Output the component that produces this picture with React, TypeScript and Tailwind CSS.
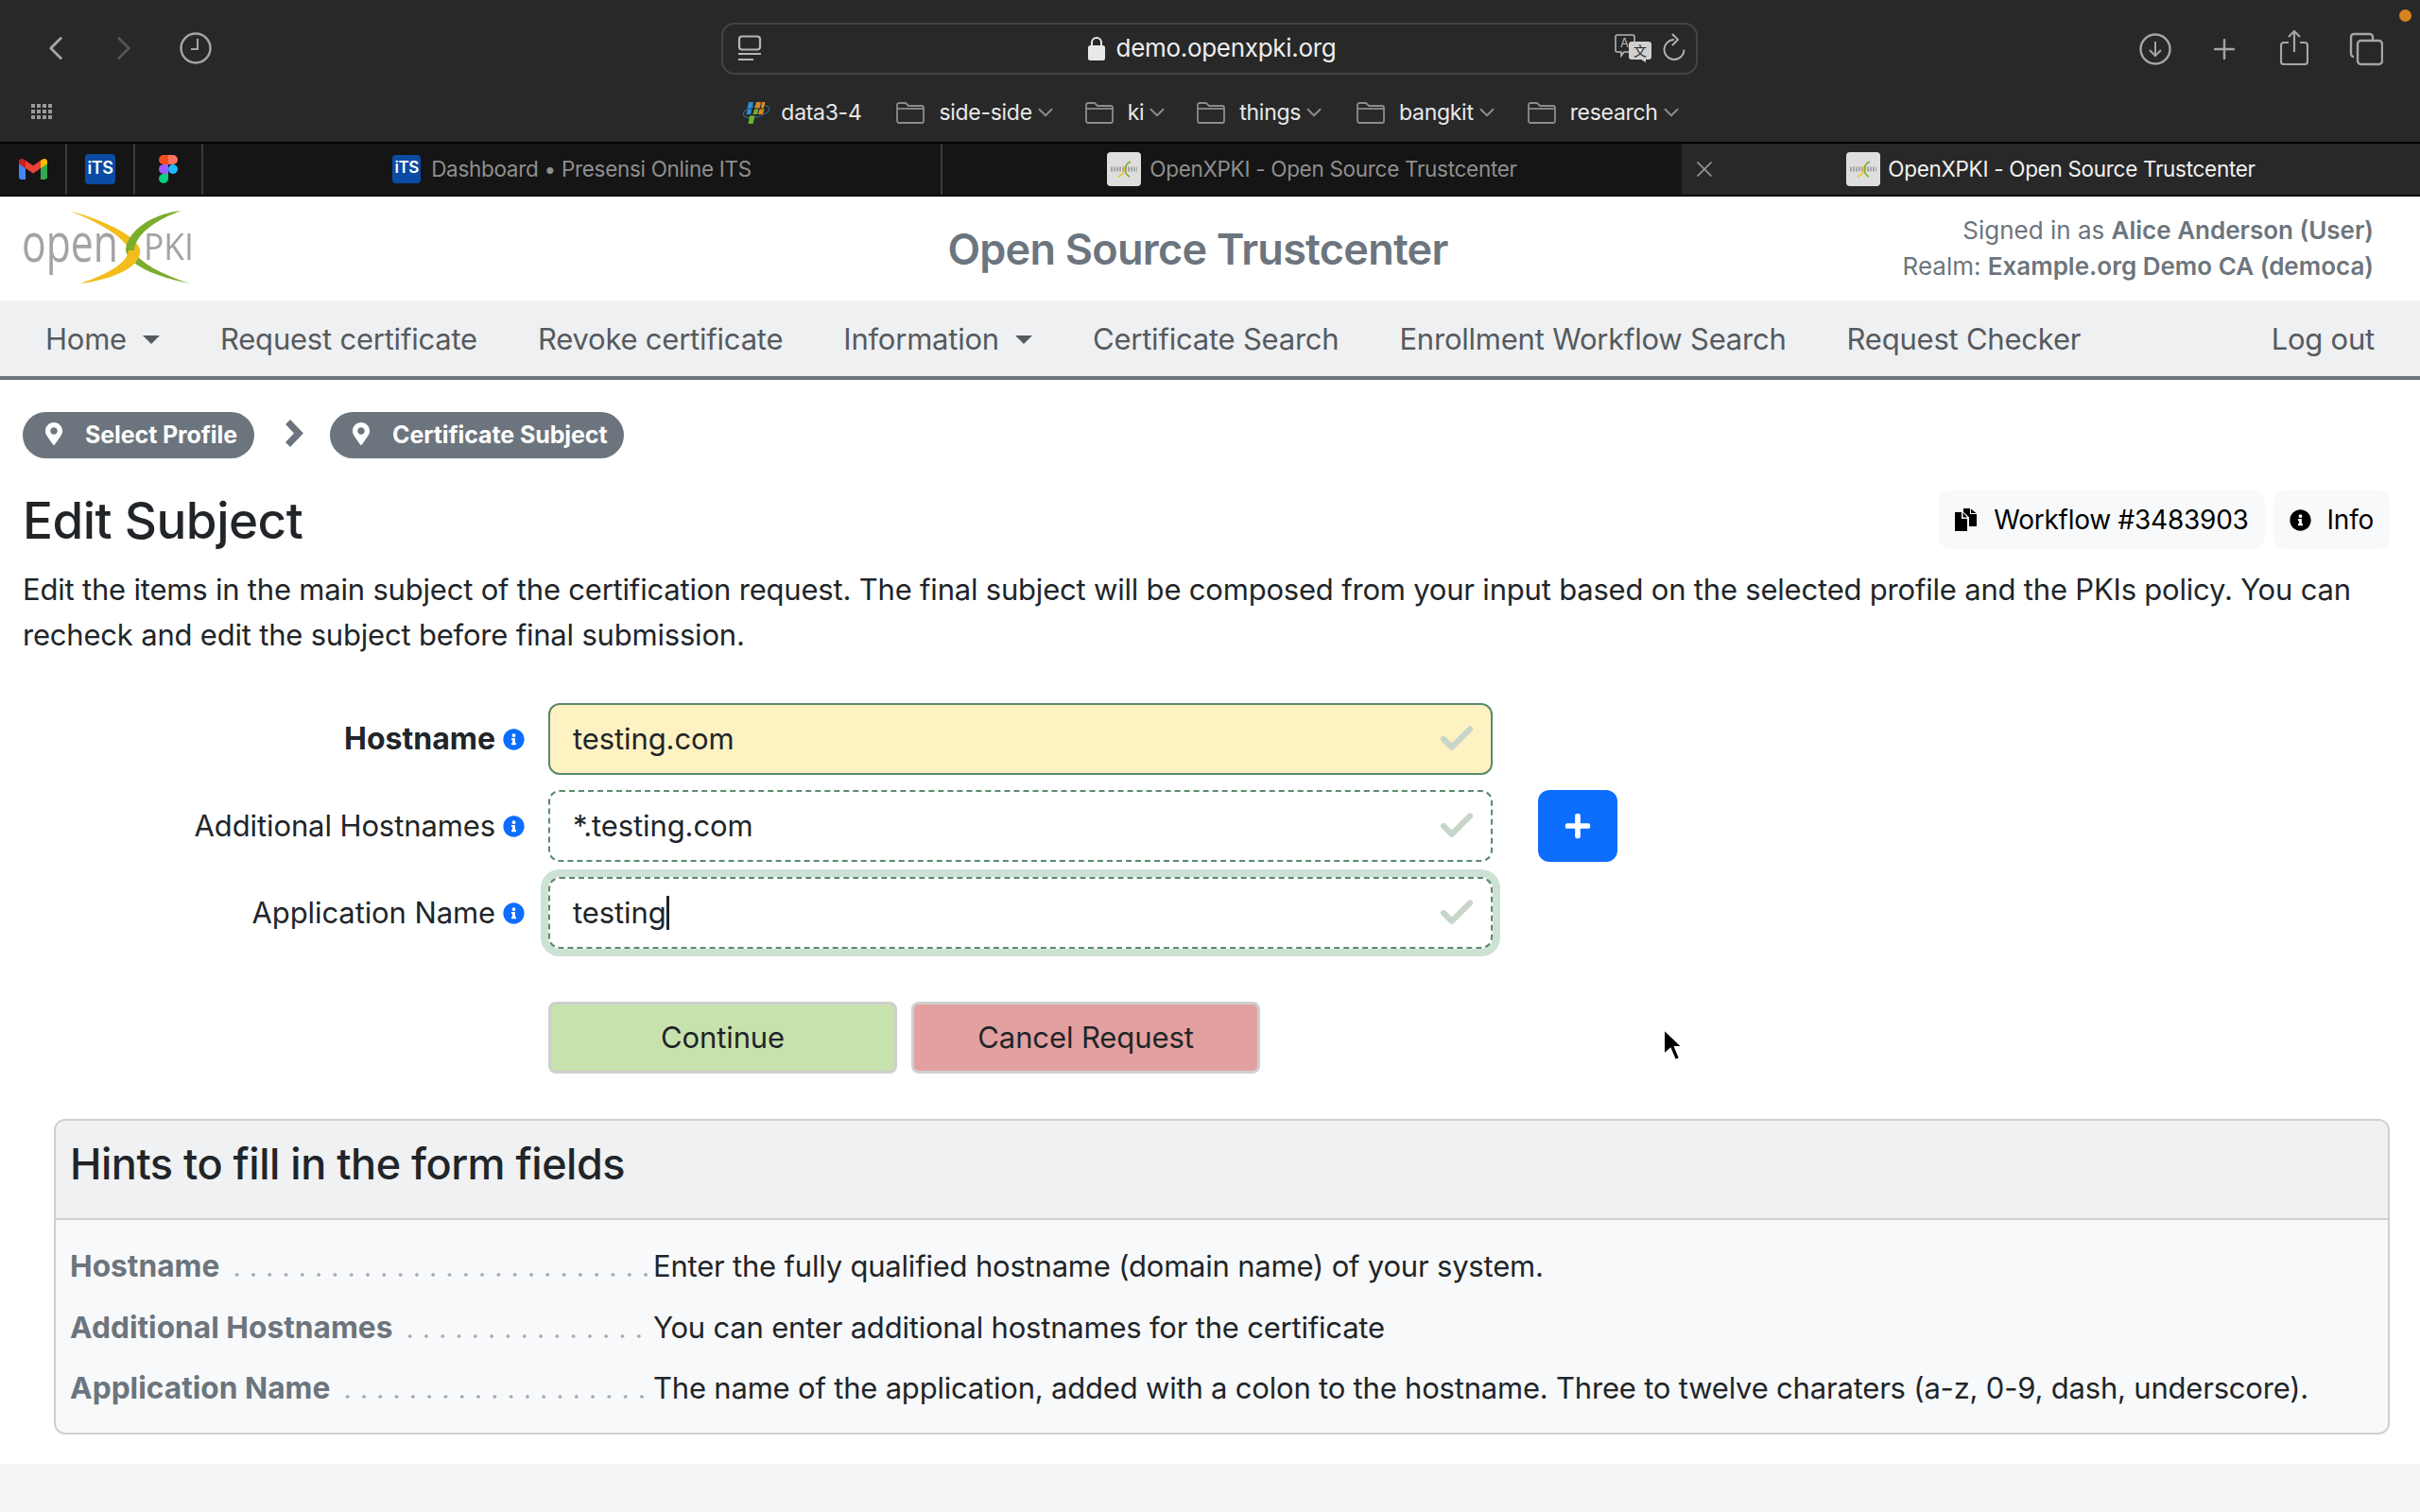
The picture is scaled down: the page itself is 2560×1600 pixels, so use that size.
import React from 'react';
import { ChevronLeft, ChevronRight, ChevronDown, Plus, Check, X } from 'lucide-react';
import { FaMapMarkerAlt, FaInfoCircle, FaPlus } from 'react-icons/fa';

const SANS = 'font-["Inter","Liberation_Sans",sans-serif]';

const FolderIcon = () => (
  <svg width="30" height="23" viewBox="0 0 30 23" fill="none" stroke="#8c8c8c" strokeWidth="1.8" className="shrink-0">
    <path d="M1 20V3a2 2 0 0 1 2-2h7l3 3h14a2 2 0 0 1 2 2v14a2 2 0 0 1-2 2H3a2 2 0 0 1-2-2z" />
    <path d="M1 7h28" />
  </svg>
);

const GmailIcon = () => (
  <svg width="30" height="22" viewBox="0 0 30 24" preserveAspectRatio="none" className="shrink-0">
    <path d="M0 4v17a3 3 0 0 0 3 3h4V10z" fill="#4285f4" />
    <path d="M23 10v14h4a3 3 0 0 0 3-3V4z" fill="#34a853" />
    <path d="M7 2v9l8 6 8-6V2l-8 6z" fill="#ea4335" />
    <path d="M0 3v3l7 5V2L5 .7A3 3 0 0 0 0 3z" fill="#c5221f" />
    <path d="M23 2v9l7-5V3a3 3 0 0 0-5-2.3z" fill="#fbbc04" />
  </svg>
);

const ItsIcon = ({ w, h }: { w: number; h: number }) => (
  <div
    className="flex items-center justify-center rounded-[4px] bg-[#0b4ba3] pb-[3px] leading-none text-[#ffffff] font-semibold tracking-[-0.5px] shrink-0"
    style={{ width: w, height: h, fontSize: Math.round(w * 0.56) }}
  >
    iTS
  </div>
);

const FigmaIcon = () => (
  <svg width="20" height="30" viewBox="0 0 20 30" className="shrink-0">
    <path d="M0 5a5 5 0 0 1 5-5h5v10H5a5 5 0 0 1-5-5z" fill="#f24e1e" />
    <path d="M10 0h5a5 5 0 0 1 0 10h-5z" fill="#ff7262" />
    <path d="M0 15a5 5 0 0 1 5-5h5v10H5a5 5 0 0 1-5-5z" fill="#a259ff" />
    <circle cx="15" cy="15" r="5" fill="#1abcfe" />
    <path d="M0 25a5 5 0 0 1 5-5h5v5a5 5 0 0 1-10 0z" fill="#0acf83" />
  </svg>
);

const DataIcon = () => (
  <svg width="30" height="24" viewBox="0 0 30 24" className="shrink-0">
    <ellipse cx="15" cy="11" rx="14" ry="6" transform="rotate(-14 15 11)" fill="none" stroke="#2a6f9e" strokeWidth="1" />
    <path d="M7 1h5l-1.5 6.5H5.500z" fill="#2a8fd8" />
    <path d="M15 1h5l-1.5 6.500h-5z" fill="#d98826" />
    <path d="M21 1h3.500l-1.500 6.500h-3z" fill="#d98826" />
    <path d="M6 8.500h4.500L9 14H4.500z" fill="#2a8fd8" />
    <path d="M13 8.500h4.500L16 14h-4.500z" fill="#6eb32a" />
    <path d="M18.500 8.500h5L22 14h-5z" fill="#d98826" />
    <path d="M8 15.500h5.500L11.500 24H6.500z" fill="#6eb32a" />
  </svg>
);

const OpenxpkiFavicon = () => (
  <div className="flex h-[36px] w-[36px] shrink-0 items-center justify-center rounded-[4px] bg-[#dedede]">
    <svg width="30" height="18" viewBox="0 0 30 18" fill="none">
      <path d="M1 9h28" stroke="#a5a5a5" strokeWidth="5" strokeDasharray="2 1" />
      <path d="M22 1C15 4 14 13 21 17" stroke="#77ab2c" strokeWidth="1.5" />
      <path d="M9 17c7-3 8-8 5-11" stroke="#eec21f" strokeWidth="1.5" />
    </svg>
  </div>
);

const BrowserChrome = () => (
  <div className={`relative ${SANS}`}>
    <div className="h-[150px] bg-[#282828] flex flex-col">
      <div className="flex h-[102px] items-center">
        <div className="flex w-[763px] items-center">
          <ChevronLeft size={42} strokeWidth={1.7} className="ml-[38px] text-[#a5a5a5]" />
          <ChevronRight size={42} strokeWidth={1.7} className="ml-[30px] text-[#555555]" />
          <svg width="36" height="36" viewBox="0 0 36 36" fill="none" stroke="#a5a5a5" strokeWidth="2.4" className="ml-[37px]">
            <circle cx="18" cy="18" r="15.5" />
            <path d="M20 8v11h-7" strokeWidth="2" />
          </svg>
        </div>
        <div className="flex h-[55px] w-[1033px] items-center rounded-[14px] border-2 border-[#444444]">
          <svg width="26" height="28" viewBox="0 0 26 28" fill="none" stroke="#b5b5b5" strokeWidth="2.2" className="ml-[15px]">
            <rect x="2" y="1.5" width="22" height="14" rx="3" />
            <path d="M1 20h24M1 26h16" />
          </svg>
          <div className="flex flex-1 items-center justify-center pl-[50px]">
            <svg width="18" height="26" viewBox="0 0 18 26" className="shrink-0">
              <path d="M4 11V7a5 5 0 0 1 10 0v4" fill="none" stroke="#e8e8e8" strokeWidth="2" />
              <rect x="0" y="10" width="18" height="16" rx="2.5" fill="#e8e8e8" />
            </svg>
            <span className="ml-[12px] text-[26px] leading-none tracking-[-0.3px] text-[#eeeeee]">demo.openxpki.org</span>
          </div>
          <svg width="40" height="30" viewBox="0 0 40 30" className="shrink-0">
            <path d="M3 1h16a2 2 0 0 1 2 2v14a2 2 0 0 1-2 2H10l-3 4v-4H3a2 2 0 0 1-2-2V3a2 2 0 0 1 2-2z" fill="none" stroke="#b5b5b5" strokeWidth="1.6" />
            <text x="6" y="14" fontSize="13" fill="#b5b5b5">A</text>
            <path d="M18 8h18a3 3 0 0 1 3 3v13a3 3 0 0 1-3 3h-3v3l-5-3h-10a3 3 0 0 1-3-3V11a3 3 0 0 1 3-3z" fill="#d0d0d0" />
            <text x="20" y="23" fontSize="14" fill="#282828" fontFamily="Noto Sans CJK SC, sans-serif">文</text>
          </svg>
          <svg width="26" height="32" viewBox="0 0 26 32" fill="none" stroke="#b5b5b5" strokeWidth="1.8" className="ml-[11px] mr-[9px] shrink-0">
            <path d="M12 7a10.500 10.500 0 1 0 10.500 10.500" />
            <path d="M10 1l6 6-6 6" />
          </svg>
        </div>
        <div className="relative flex-1 h-full">
          <div className="absolute left-[467px] top-[34px] flex items-center">
            <svg width="34" height="34" viewBox="0 0 34 34" fill="none" stroke="#a5a5a5" strokeWidth="2.4">
              <circle cx="17" cy="17" r="15.5" />
              <path d="M17 9v15M11 18l6 6 6-6" strokeWidth="2" />
            </svg>
            <Plus size={34} strokeWidth={1.7} className="ml-[39px] text-[#a5a5a5]" />
            <svg width="30" height="38" viewBox="0 0 30 38" fill="none" stroke="#a5a5a5" strokeWidth="2.2" className="ml-[42px] -mt-[4px]">
              <path d="M9 14H4a3 3 0 0 0-3 3v17a3 3 0 0 0 3 3h22a3 3 0 0 0 3-3V17a3 3 0 0 0-3-3h-5" />
              <path d="M15 24V2M9 8l6-6 6 6" />
            </svg>
            <svg width="36" height="36" viewBox="0 0 36 36" fill="none" stroke="#a5a5a5" strokeWidth="2.4" className="ml-[43px]">
              <path d="M5 26a3 3 0 0 1-3-3V5a3 3 0 0 1 3-3h17a3 3 0 0 1 3 3v3" />
              <rect x="9" y="9" width="26" height="25" rx="3.5" />
            </svg>
          </div>
        </div>
      </div>
      <div className="relative flex h-[34px] items-center justify-center tracking-[-0.3px]">
        <div className="absolute left-[33px] top-[8px] grid grid-cols-4 gap-[2px]">
          {Array.from({ length: 12 }).map((_, i) => (
            <div key={i} className="h-[4px] w-[4px] bg-[#9a9a9a]" />
          ))}
        </div>
        <DataIcon />
        <span className="ml-[11px] text-[23px] text-[#e8e8e8]">data3-4</span>
        {[
          { name: 'side-side', ml: 'ml-[37px]' },
          { name: 'ki', ml: 'ml-[35px]' },
          { name: 'things', ml: 'ml-[35px]' },
          { name: 'bangkit', ml: 'ml-[38px]' },
          { name: 'research', ml: 'ml-[36px]' },
        ].map(b => (
          <div key={b.name} className={`flex items-center ${b.ml}`}>
            <FolderIcon />
            <span className="ml-[15px] text-[23px] text-[#e8e8e8]">{b.name}</span>
            <ChevronDown size={26} strokeWidth={1.8} className="ml-[1px] -mr-[6px] text-[#8c8c8c]" />
          </div>
        ))}
      </div>
    </div>
    <div className="flex h-[58px] border-y-2 border-[#000000] bg-[#151515] text-[22.5px] tracking-[-0.3px]">
      <div className="flex w-[71px] items-center justify-center border-r-2 border-[#3a3a3a]"><GmailIcon /></div>
      <div className="flex w-[72px] items-center justify-center border-r-2 border-[#3a3a3a]"><ItsIcon w={32} h={32} /></div>
      <div className="flex w-[72px] items-center justify-center border-r-2 border-[#3a3a3a]"><FigmaIcon /></div>
      <div className="flex w-[782px] items-center justify-center border-r-2 border-[#3a3a3a]">
        <ItsIcon w={30} h={30} />
        <span className="ml-[11px] text-[#8f8f8f]">Dashboard • Presensi Online ITS</span>
      </div>
      <div className="flex w-[782px] items-center justify-center">
        <OpenxpkiFavicon />
        <span className="ml-[9px] text-[#8f8f8f]">OpenXPKI - Open Source Trustcenter</span>
      </div>
      <div className="relative flex flex-1 items-center justify-center bg-[#282828]">
        <X size={28} strokeWidth={1.5} className="absolute left-[10px] text-[#9a9a9a]" />
        <OpenxpkiFavicon />
        <span className="ml-[8px] text-[#f2f2f2]">OpenXPKI - Open Source Trustcenter</span>
      </div>
    </div>
    <div className="absolute left-[2538px] top-[10px] h-[13px] w-[13px] rounded-full bg-[#d9831f]" />
  </div>
);

const Logo = () => (
  <svg width="186" height="80" viewBox="0 0 186 80" className="shrink-0">
    <g className="blur-[0.6px]">
      <text x="0" y="54" fontSize="56" fontFamily="Open Sans, sans-serif" fill="#a3a3a3" textLength="102" lengthAdjust="spacingAndGlyphs">open</text>
      <text x="129" y="52" fontSize="39" fontFamily="Open Sans, sans-serif" fill="#a3a3a3" textLength="53" lengthAdjust="spacingAndGlyphs">PKI</text>
      <path d="M110 42C112 56 140 70 178 77 150 68 122 54 119 42z" fill="#7cae2e" />
      <path d="M51 0C85 10 118 24 125 40 128 58 100 72 62 77 88 68 112 56 113 42 110 28 80 12 51 0z" fill="#f3bd1c" />
      <path d="M169 0C140 2 110 22 110 42L119 42C120 24 145 8 169 0z" fill="#7cae2e" />
    </g>
  </svg>
);

const Header = () => (
  <div className="flex h-[110px] items-center bg-[#ffffff] pl-[23px] pr-[49px]">
    <div className="flex flex-1 basis-0"><Logo /></div>
    <div className="text-center text-[45px] font-semibold leading-none tracking-[-0.75px] text-[#6c757d]">
      Open Source Trustcenter
    </div>
    <div className="flex-1 basis-0 text-right text-[26px] leading-[38px] text-[#6c757d]">
      <div>Signed in as <b className="font-semibold">Alice Anderson (User)</b></div>
      <div>Realm: <b className="font-semibold">Example.org Demo CA (democa)</b></div>
    </div>
  </div>
);

const navLinks = [
  { label: 'Home', caret: true },
  { label: 'Request certificate' },
  { label: 'Revoke certificate' },
  { label: 'Information', caret: true },
  { label: 'Certificate Search' },
  { label: 'Enrollment Workflow Search' },
  { label: 'Request Checker' },
];

const Nav = () => (
  <div className="flex h-[84px] items-center border-b-4 border-[#6c757d] bg-[#eff0f2] px-4 pt-[2px] text-[31px] tracking-[-0.22px] text-[#555a5f]">
    {navLinks.map(l => (
      <div key={l.label} className="flex items-center px-8">
        {l.label}
        {l.caret && <span className="ml-[17px] h-0 w-0 border-x-[9px] border-t-[9px] border-x-transparent border-t-[#555a5f]" />}
      </div>
    ))}
    <div className="ml-auto px-8">Log out</div>
  </div>
);

const Crumb = ({ label }: { label: string }) => (
  <div className="flex h-[49px] items-center rounded-full bg-[#6c757d] pl-[21px] pr-[18px] text-[25px] font-bold tracking-[-0.1px] text-[#ffffff]">
    <FaMapMarkerAlt size={24} className="-mt-[4px]" />
    <span className="ml-[21px]">{label}</span>
  </div>
);

const FileIcon = () => (
  <svg width="24" height="24" viewBox="0 0 24 24" className="shrink-0">
    <path d="M0 4h7v7h6v13H0z" fill="#000000" />
    <path d="M8.5 4l4.5 5.5H8.5z" fill="#000000" />
    <path d="M9 0h7v6h7v13h-8V9.5L9 3.5z" fill="#000000" />
    <path d="M17 .5L22.5 5H17z" fill="#000000" />
  </svg>
);

const ToolButton = ({ icon, label }: { icon: React.ReactNode; label: string }) => (
  <div className="flex h-[62px] items-center rounded-[12px] bg-[#f8f9fa] px-[17px] text-[28px] tracking-[-0.25px] text-[#000000]">
    {icon}
    <span className="ml-[17px]">{label}</span>
  </div>
);

const fields = [
  { label: 'Hostname', value: 'testing.com', bold: true, box: 'border-solid bg-[#fff2c2]' },
  { label: 'Additional Hostnames', value: '*.testing.com', box: 'border-dashed bg-[#ffffff]', add: true },
  { label: 'Application Name', value: 'testing', box: 'border-dashed bg-[#ffffff] shadow-[0_0_0_8px_#cde2d5]', caret: true },
];

const Form = () => (
  <div className="mt-[49px] flex flex-col">
    {fields.map(f => (
      <div key={f.label} className="mb-[16px] flex h-[76px] items-center">
        <div className={`w-[500px] text-right text-[#212529] ${f.bold ? 'text-[32px] font-bold' : 'text-[31px] tracking-[-0.1px]'}`}>{f.label}</div>
        <FaInfoCircle size={23} className="ml-[8px] text-[#0d6efd]" />
        <div className={`ml-[25px] flex h-[76px] w-[999px] items-center rounded-[12px] border-2 border-[#5b8a6d] pl-[24px] pr-[15px] text-[31px] tracking-[-0.1px] text-[#212529] ${f.box}`}>
          <span>{f.value}</span>
          {f.caret && <span className="h-[36px] w-[3px] bg-[#212529]" />}
          <Check size={42} strokeWidth={3.5} className="ml-auto text-[#c8d6c9]" />
        </div>
        {f.add && (
          <div className="ml-[48px] flex h-[76px] w-[84px] items-center justify-center rounded-[12px] bg-[#0d6efd] text-[#ffffff]">
            <FaPlus size={30} />
          </div>
        )}
      </div>
    ))}
  </div>
);

const hints = [
  { term: 'Hostname', text: 'Enter the fully qualified hostname (domain name) of your system.' },
  { term: 'Additional Hostnames', text: 'You can enter additional hostnames for the certificate' },
  { term: 'Application Name', text: 'The name of the application, added with a colon to the hostname. Three to twelve charaters (a-z, 0-9, dash, underscore).' },
];

const Hints = () => (
  <div className="ml-[33px] mt-[48px] h-[334px] overflow-hidden rounded-[12px] border-2 border-[#cfcfcf] bg-[#f8f9fa]">
    <div className="flex h-[105px] items-center border-b-2 border-[#cfcfcf] bg-[#f0f1f3] pb-[12px] pl-[15px] text-[45px] font-medium tracking-[-0.5px] text-[#212529]">
      Hints to fill in the form fields
    </div>
    <div className="flex flex-col pl-[15px] pt-[17px]">
      {hints.map(h => (
        <div key={h.term} className="flex h-[64.5px] items-center">
          <div className="flex w-[617px] items-center">
            <span className="text-[31.7px] font-bold text-[#6c757d]">{h.term}</span>
            <div className="ml-[10px] mr-[6px] mt-[18px] h-[6px] flex-1 bg-[radial-gradient(circle,#a7adb3_1.5px,transparent_2px)] bg-[length:17.3px_6px] bg-repeat-x" />
          </div>
          <span className="text-[31px] tracking-[-0.2px] text-[#212529]">{h.text}</span>
        </div>
      ))}
    </div>
  </div>
);

const Cursor = () => (
  <svg width="24" height="38" viewBox="0 0 24 38" className="absolute left-[1757px] top-[1088px]">
    <path d="M3 1v27l7-6 5 12 5-2-5-12h8z" fill="#000000" stroke="#ffffff" strokeWidth="2" />
  </svg>
);

export default function App() {
  return (
    <div className={`relative flex min-h-[1600px] flex-col bg-[#ffffff] ${SANS}`}>
      <BrowserChrome />
      <Header />
      <Nav />
      <div className="flex-1 pl-[24px] pr-[32px]">
        <div className="mt-[34px] flex items-center">
          <Crumb label="Select Profile" />
          <svg width="20" height="29" viewBox="0 0 20 29" className="ml-[33px] mr-[27px] -mt-[4px] shrink-0">
            <path d="M0 5l5-5 14 14.500L5 29l-5-5 9-9.500z" fill="#6c757d" />
          </svg>
          <Crumb label="Certificate Subject" />
        </div>
        <div className="mt-[32px] flex items-center justify-between">
          <h2 className="pt-[2px] text-[53px] font-medium leading-[64px] tracking-[-0.5px] text-[#212529]">Edit Subject</h2>
          <div className="flex gap-[9px]">
            <ToolButton icon={<FileIcon />} label="Workflow #3483903" />
            <ToolButton icon={<FaInfoCircle size={23} />} label="Info" />
          </div>
        </div>
        <p className="mt-[17px] text-[31px] leading-[47.5px] tracking-[-0.2px] text-[#212529]">
          Edit the items in the main subject of the certification request. The final subject will be composed from your input based on the selected profile and the PKIs policy. You can recheck and edit the subject before final submission.
        </p>
        <Form />
        <div className="ml-[556px] mt-[40px] flex gap-[15px] text-[31px] tracking-[-0.1px] text-[#212529]">
          <div className="flex h-[76px] w-[369px] items-center justify-center rounded-[8px] border-[3px] border-[#cfcfcf] bg-[#c8e2ae]">Continue</div>
          <div className="flex h-[76px] w-[369px] items-center justify-center rounded-[8px] border-[3px] border-[#cfcfcf] bg-[#e3a0a0]">Cancel Request</div>
        </div>
        <Hints />
      </div>
      <div className="h-[51px] bg-[#f5f5f5]" />
      <Cursor />
    </div>
  );
}
